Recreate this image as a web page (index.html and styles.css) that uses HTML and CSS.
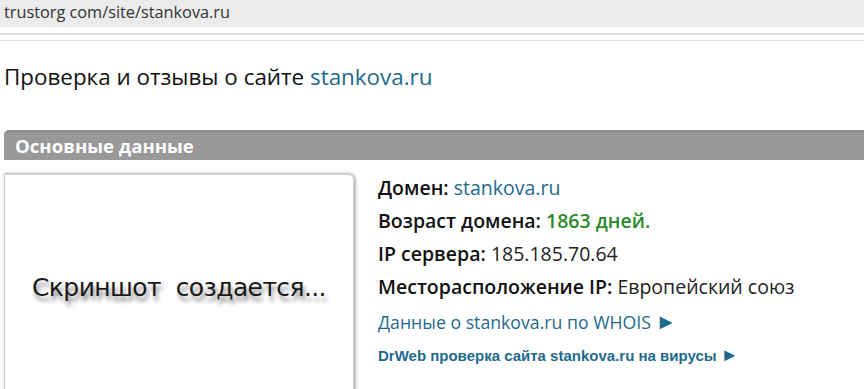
FILE: index.html
```html
<!DOCTYPE html>
<html>
<head lang="ru">
    <meta charset="UTF-8">
    <title>Проверка и отзывы о сайте stankova.ru</title>
    <link rel="stylesheet" href="styles.css">
</head>
<body>
<div class="addr">trustorg com/site/stankova.ru</div>
<div class="rule"></div>
<div class="page">
    <h1 class="title">Проверка и отзывы о сайте <a href="#">stankova.ru</a></h1>
    <div class="band">Основные данные</div>
    <div class="main">
        <div class="shot">
            <span class="shot-text">Скриншот&nbsp; создается...</span>
        </div>
        <ul class="info">
            <li><b>Домен:</b> <a href="#">stankova.ru</a></li>
            <li><b>Возраст домена:</b> <span class="age">1863 дней.</span></li>
            <li><b>IP сервера:</b> 185.185.70.64</li>
            <li><b>Месторасположение IP:</b> Европейский союз</li>
            <li class="whois"><a href="#">Данные о stankova.ru по WHOIS <span class="arr">►</span></a></li>
            <li class="drweb"><a href="#">DrWeb проверка сайта stankova.ru на вирусы <span class="arr">►</span></a></li>
        </ul>
    </div>
</div>
</body>
</html>
```

FILE: styles.css
```css
@charset "UTF-8";
/*initial reset*/
body,h1,ul,li{margin:0;padding:0}
ul{list-style:none}
a{text-decoration:none;color:#1f6a8c}
body{font-family:"Open Sans",sans-serif;color:#222;background:#fff;overflow:hidden}

.addr{
    height:27px;
    background:#ebebeb;
    padding-left:4px;
    font-size:16.3px;
    line-height:24px;
    color:#333;
}
.rule{
    margin-top:6px;
    height:5px;
    border-top:2px solid #dedede;
    border-bottom:1px solid #e2e2e2;
}
.page{
    padding-left:4px;
}
.title{
    font-size:22.4px;
    font-weight:normal;
    line-height:30px;
    margin-top:21px;
    color:#111;
}
.band{
    margin-top:38px;
    height:30px;
    background:#999;
    border-radius:5px 0 0 0;
    border-top:2px solid #8e8e8e;
    box-sizing:border-box;
    color:#fff;
    font-weight:bold;
    font-size:18.6px;
    line-height:27px;
    padding-left:11px;
}
.main{
    display:flex;
    margin-top:14px;
}
.shot{
    flex:none;
    width:350px;
    height:240px;
    border:1px solid #cfcfcf;
    border-radius:0 6px 0 0;
    box-shadow:2px 0 3px #bbb, 0 -1px 3px #ccc;
    display:flex;
    align-items:center;
    justify-content:center;
    padding-bottom:14px;
    box-sizing:border-box;
}
.shot-text{
    font-family:"DejaVu Sans",sans-serif;
    font-size:25px;
    color:#1a1a1a;
    text-shadow:2px 5px 4px #888;
    letter-spacing:-0.6px;
}
.info{
    margin-left:24px;
    margin-top:-3px;
    font-size:19.5px;
    color:#222;
}
.info li{
    line-height:33px;
}
.info b{
    font-weight:600;
    color:#111;
}
.age{
    color:#2a8a2a;
    font-weight:600;
}
.whois{
    font-size:17.7px;
    margin-top:3px;
}
.drweb{
    font-family:"Liberation Sans",Arial,sans-serif;
    font-weight:bold;
    font-size:15px;
}
.arr{
    font-size:1.2em;
    line-height:1;
}
```
